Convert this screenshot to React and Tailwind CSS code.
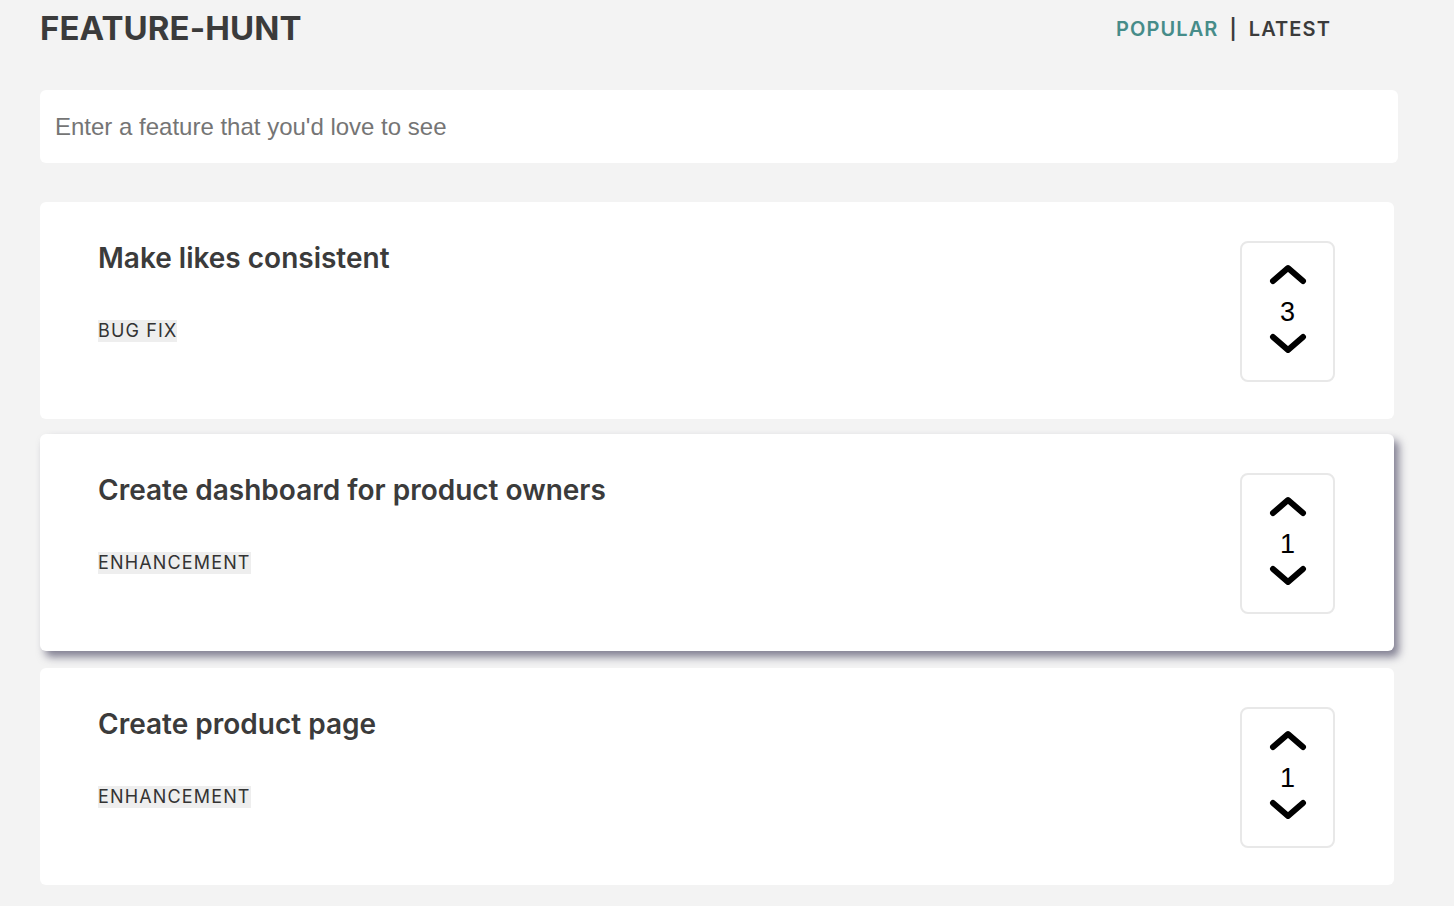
import { useState } from "react";

const features = [
  { id: 1, title: "Make likes consistent", tag: "BUG FIX", votes: 3 },
  { id: 2, title: "Create dashboard for product owners", tag: "ENHANCEMENT", votes: 1, hover: true },
  { id: 3, title: "Create product page", tag: "ENHANCEMENT", votes: 1 },
];

function Chevron({ down }) {
  return (
    <svg width="38" height="24" viewBox="0 0 38 24" fill="none">
      <path
        d={down ? "M4 5 L19 18 L34 5" : "M4 19 L19 6 L34 19"}
        stroke="#000"
        strokeWidth="6"
        strokeLinecap="round"
        strokeLinejoin="round"
      />
    </svg>
  );
}

function VoteBox({ votes }) {
  return (
    <div className="w-[95px] h-[141px] shrink-0 border-2 border-[#e8e8e8] rounded-lg flex flex-col items-center pt-[19px]">
      <button className="block leading-none"><Chevron /></button>
      <span className="block text-[27px] leading-[30px] text-black font-['Liberation_Sans',sans-serif] mt-[11px]">{votes}</span>
      <button className="block leading-none mt-[5px]"><Chevron down /></button>
    </div>
  );
}

export default function App() {
  const [text, setText] = useState("");

  return (
    <div className="min-h-screen bg-[#f3f3f3] font-['Inter',sans-serif] pl-[40px] pb-[20px]">
      {/* header */}
      <div className="w-[1358px] flex items-center justify-between pt-[6px] pr-[67px]">
        <h1 className="text-[33px] leading-[44px] font-bold text-[#3b3b3b] tracking-[0.1px]">FEATURE-HUNT</h1>
        <nav className="flex items-center text-[20px] font-semibold tracking-[1.1px] mt-[2px]">
          <span className="text-[#468c89]">POPULAR</span>
          <span className="text-[#3b3b3b] mx-[11px]">|</span>
          <span className="text-[#3b3b3b]">LATEST</span>
        </nav>
      </div>

      {/* input */}
      <input
        value={text}
        onChange={(e) => setText(e.target.value)}
        placeholder="Enter a feature that you'd love to see"
        className="mt-[40px] w-[1358px] h-[73px] bg-white rounded-md px-[15px] text-[24px] font-['Liberation_Sans',sans-serif] text-[#333] placeholder:text-[#757575] outline-none"
      />

      {/* list */}
      <div className="mt-[39px] w-[1354px] flex flex-col gap-[15px]">
        {features.map((f) => (
          <div
            key={f.id}
            className={
              "bg-white rounded-md h-[217px] flex justify-between pl-[58px] pr-[59px] pt-[39px] " +
              (f.hover ? "shadow-[5px_6px_9px_rgba(70,68,95,0.65)] mb-[2px]" : "")
            }
          >
            <div>
              <h2 className="text-[28px] leading-[34px] font-semibold text-[#3b3b3b]">{f.title}</h2>
              <span className="inline-block mt-[45px] bg-[#eeeeee] text-[#333] text-[18px] leading-[22px] tracking-[1.15px] font-normal">
                {f.tag}
              </span>
            </div>
            <VoteBox votes={f.votes} />
          </div>
        ))}
      </div>
    </div>
  );
}
